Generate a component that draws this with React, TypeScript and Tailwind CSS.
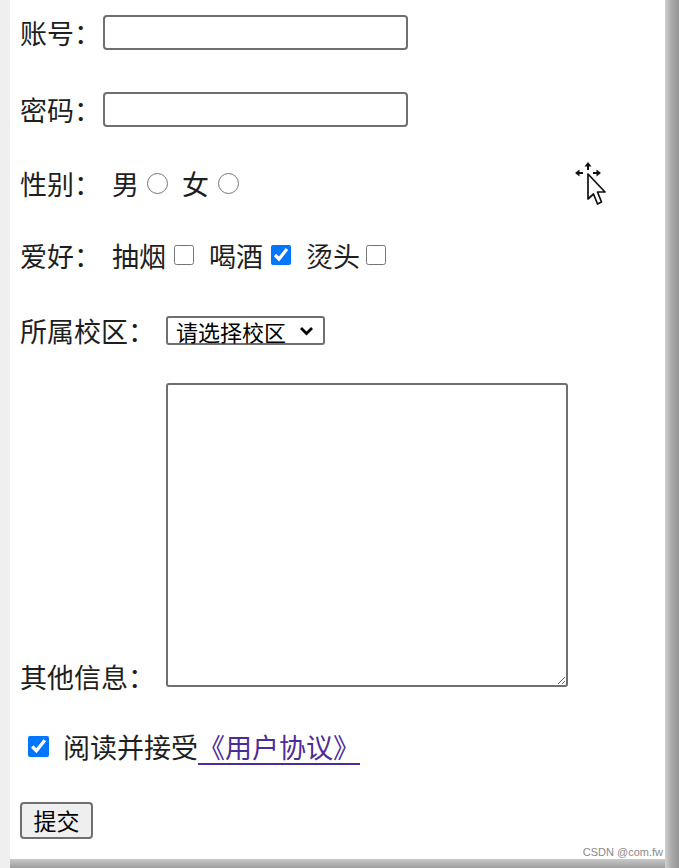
import React from 'react';

const font = { fontFamily: '"Noto Sans CJK SC", "Liberation Sans", sans-serif' };

function Cursor() {
  return (
    <svg width="40" height="50" viewBox="0 0 40 50" className="absolute left-[560px] top-[160px]">
      {/* move arrows */}
      <path d="M18 2 L21.5 6.5 L19 6.5 L19 10 L17 10 L17 6.5 L14.5 6.5 Z" fill="#111" />
      <path d="M5 13 L9.5 9.5 L9.5 12 L13 12 L13 14 L9.5 14 L9.5 16.5 Z" fill="#111" />
      <path d="M31 13 L26.5 9.5 L26.5 12 L23 12 L23 14 L26.5 14 L26.5 16.5 Z" fill="#111" />
      {/* pointer */}
      <path
        d="M18 14 L18 39 L23.5 34 L27.5 44 L31.5 42 L27.5 32 L35 32 Z"
        fill="#fff"
        stroke="#111"
        strokeWidth="1.7"
        strokeLinejoin="round"
      />
    </svg>
  );
}

function App() {
  return (
    <div className="flex w-[679px] h-[868px] bg-[#9a9a9a] text-[#1e1e1e]" style={font}>
      <div className="w-[10px] h-full bg-[#efefef]" />
      <div className="flex flex-col">
        <div className="relative w-[655px] h-[859px] bg-white pl-[10px]">
          {/* 账号 */}
          <div className="flex items-center h-[35px] mt-[15px]">
            <span className="text-[27px] leading-none w-[83px] whitespace-nowrap">账号：</span>
            <input className="w-[305px] h-[35px] border-2 border-[#6f6f6f] rounded-[4px] bg-white" />
          </div>

          {/* 密码 */}
          <div className="flex items-center h-[35px] mt-[42px]">
            <span className="text-[27px] leading-none w-[83px] whitespace-nowrap">密码：</span>
            <input type="password" className="w-[305px] h-[35px] border-2 border-[#6f6f6f] rounded-[4px] bg-white" />
          </div>

          {/* 性别 */}
          <div className="flex items-center h-[28px] mt-[42px] text-[27px] leading-none">
            <span className="w-[92px] whitespace-nowrap">性别：</span>
            <span>男</span>
            <input type="radio" name="sex" className="w-[21px] h-[21px] m-0 ml-[8px] mr-[14px]" />
            <span>女</span>
            <input type="radio" name="sex" className="w-[21px] h-[21px] m-0 ml-[9px]" />
          </div>

          {/* 爱好 */}
          <div className="flex items-center h-[28px] mt-[44px] text-[27px] leading-none">
            <span className="w-[92px] whitespace-nowrap">爱好：</span>
            <span>抽烟</span>
            <input type="checkbox" className="w-[20px] h-[20px] m-0 ml-[8px] mr-[15px] accent-[#0075ff]" />
            <span>喝酒</span>
            <input type="checkbox" defaultChecked className="w-[20px] h-[20px] m-0 ml-[8px] mr-[15px] accent-[#0075ff]" />
            <span>烫头</span>
            <input type="checkbox" className="w-[20px] h-[20px] m-0 ml-[6px] accent-[#0075ff]" />
          </div>

          {/* 所属校区 */}
          <div className="flex items-center h-[29px] mt-[47px]">
            <span className="text-[27px] leading-none w-[146px] whitespace-nowrap">所属校区：</span>
            <div className="flex items-center justify-between w-[159px] h-[29px] border-2 border-[#6f6f6f] rounded-[3px] pl-[8px] pr-[9px] text-[22px] leading-none text-black">
              <span>请选择校区</span>
              <svg width="15" height="10" viewBox="0 0 15 10">
                <path d="M2 2 L7.5 7.5 L13 2" fill="none" stroke="#000" strokeWidth="2.8" />
              </svg>
            </div>
          </div>

          {/* 其他信息 */}
          <div className="flex items-end mt-[38px]">
            <span className="text-[27px] leading-none w-[146px] mb-[-3px] whitespace-nowrap">其他信息：</span>
            <textarea className="w-[402px] h-[304px] border-2 border-[#6f6f6f] rounded-[3px] resize bg-white" />
          </div>

          {/* 用户协议 */}
          <div className="flex items-center h-[23px] mt-[48px] text-[27px] leading-none">
            <input type="checkbox" defaultChecked className="w-[21px] h-[21px] m-0 ml-[8px] mr-[14px] accent-[#0075ff]" />
            <span>阅读并接受</span>
            <a href="#" className="text-[#4e2c96] underline underline-offset-[5px] decoration-[1.5px]">《用户协议》</a>
          </div>

          {/* 提交 */}
          <button className="mt-[44px] w-[73px] h-[37px] border-2 border-[#6f6f6f] rounded-[4px] bg-[#efefef] text-[23px] leading-none text-black">
            提交
          </button>

          <Cursor />

          <span
            className="absolute right-[2px] bottom-[1px] text-[11px] leading-none text-[#8a8a8a]"
            style={{ fontFamily: '"Liberation Sans", sans-serif' }}
          >
            CSDN @com.fw
          </span>
        </div>
        <div className="flex-1 bg-gradient-to-b from-[#c9c9c9] to-[#9d9d9d]" />
      </div>
      <div className="flex-1 h-full bg-gradient-to-r from-[#d0d0d0] via-[#a8a8a8] to-[#959595]" />
    </div>
  );
}

export default App;
